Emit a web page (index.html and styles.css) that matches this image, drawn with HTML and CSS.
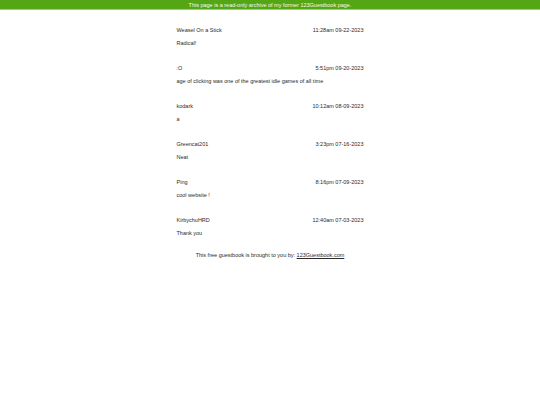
FILE: index.html
```html
<!DOCTYPE html>
<html>
<head>
<meta charset="utf-8">
<link rel="stylesheet" href="styles.css">
</head>
<body>
<div class="banner">This page is a read-only archive of my former 123Guestbook page.</div>
<main class="book">
  <div class="entries">
    <div class="entry">
      <div class="head"><span>Weasel On a Stick</span><span>11:28am 09-22-2023</span></div>
      <div class="msg">Radical!</div>
    </div>
    <div class="entry">
      <div class="head"><span>:O</span><span>5:51pm 09-20-2023</span></div>
      <div class="msg">age of clicking was one of the greatest idle games of all time</div>
    </div>
    <div class="entry">
      <div class="head"><span>kodark</span><span>10:12am 08-09-2023</span></div>
      <div class="msg">a</div>
    </div>
    <div class="entry">
      <div class="head"><span>Greencat201</span><span>3:23pm 07-16-2023</span></div>
      <div class="msg">Neat</div>
    </div>
    <div class="entry">
      <div class="head"><span>Ping</span><span>8:16pm 07-09-2023</span></div>
      <div class="msg">cool website !</div>
    </div>
    <div class="entry">
      <div class="head"><span>KirbychuHRD</span><span>12:40am 07-03-2023</span></div>
      <div class="msg">Thank you</div>
    </div>
  </div>
  <p class="footer">This free guestbook is brought to you by: <a href="#">123Guestbook.com</a></p>
</main>
</body>
</html>
```
FILE: styles.css
```css
html, body {
  margin: 0;
  padding: 0;
  background: #ffffff;
  font-family: "Liberation Sans", Arial, sans-serif;
  color: #2a2a2a;
}
.banner {
  height: 10px;
  line-height: 10px;
  background: #55a614;
  color: #f4f9ee;
  font-size: 5.5px;
  text-align: center;
  border-bottom: 0.5px solid #9fd070;
  box-sizing: border-box;
}
.book {
  width: 187px;
  margin: 0 auto;
  padding-top: 16.5px;
  font-size: 5.5px;
  line-height: 7px;
}
.entries {
  display: flex;
  flex-direction: column;
  gap: 18px;
}
.entry {
  display: flex;
  flex-direction: column;
  gap: 6px;
}
.head {
  display: flex;
  justify-content: space-between;
}
.footer {
  margin: 15px 0 0;
  text-align: center;
}
.footer a {
  color: #2a2a2a;
  text-decoration: underline;
}
```
